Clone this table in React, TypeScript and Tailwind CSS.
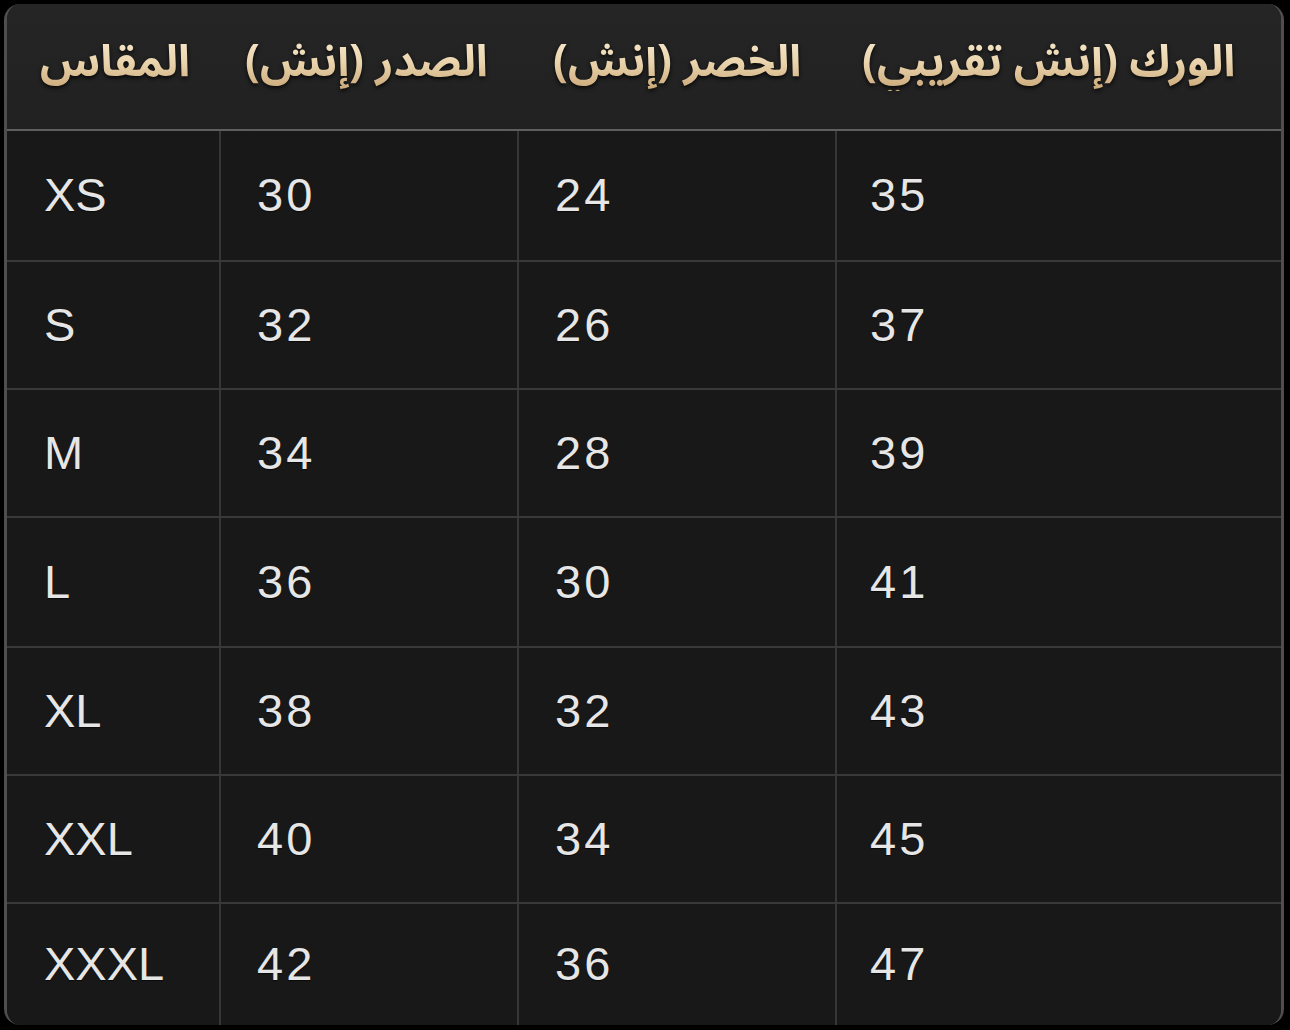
import React from "react";

const rows = [
  { s: "XS", c: "30", w: "24", h: "35", cls: "h-[131px]" },
  { s: "S", c: "32", w: "26", h: "37", cls: "h-[128px]" },
  { s: "M", c: "34", w: "28", h: "39", cls: "h-[128px]" },
  { s: "L", c: "36", w: "30", h: "41", cls: "h-[130px]" },
  { s: "XL", c: "38", w: "32", h: "43", cls: "h-[128px]" },
  { s: "XXL", c: "40", w: "34", h: "45", cls: "h-[128px]" },
  { s: "XXXL", c: "42", w: "36", h: "47", cls: "h-[121px]" },
];

function Head({ children, cls }: { children: React.ReactNode; cls: string }) {
  return (
    <div className={cls}>
      <span
        dir="rtl"
        className="inline-block whitespace-nowrap bg-gradient-to-b from-[#f7ead0] via-[#ead4ad] to-[#c9a676] bg-clip-text text-transparent font-bold text-[44px] leading-[1.3] [filter:drop-shadow(0_2px_2px_rgba(0,0,0,0.8))]"
        style={{ fontFamily: '"Noto Sans Arabic", "Noto Naskh Arabic", "DejaVu Sans", sans-serif' }}
      >
        {children}
      </span>
    </div>
  );
}

export default function App() {
  return (
    <div className="w-[1290px] h-[1030px] bg-black pt-[4px] pl-[4px]">
      <div className="w-[1280px] h-[1021px] rounded-[16px] overflow-hidden border-l-[3px] border-r-[3px] border-[#4e4e4e] bg-[#171717] flex flex-col">
        <div className="h-[127px] shrink-0 border-b-2 border-[#5e5e5e] bg-gradient-to-b from-[#252525] to-[#212121] flex items-center pb-[8px]">
          <Head cls="w-[238px] pl-[33px]">المقاس</Head>
          <Head cls="w-[308px]">الصدر (إنش)</Head>
          <Head cls="w-[309px]">الخصر (إنش)</Head>
          <Head cls="flex-1">{"الورك (إنش تقريب\u064A)"}</Head>
        </div>
        {rows.map((r, i) => (
          <div
            key={r.s}
            className={`${r.cls} shrink-0 grid grid-cols-[214px_298px_318px_1fr] ${i < rows.length - 1 ? "border-b-2 border-[#393939]" : ""}`}
            style={{ fontFamily: '"Liberation Sans", Arial, sans-serif' }}
          >
            {[r.s, r.c, r.w, r.h].map((t, j) => (
              <div
                key={j}
                className={`flex items-center text-[47px] text-[#e6e6e6] bg-[#181818] ${j === 3 ? "pl-[33px]" : "pl-[36px]"} ${j < 3 ? "border-r-2 border-[#363636]" : ""}`}
              >
                <span className={`${j === 0 ? "pl-[1px]" : "tracking-[3px]"} [text-shadow:0_1px_1px_rgba(0,0,0,0.6)]`}>{t}</span>
              </div>
            ))}
          </div>
        ))}
      </div>
    </div>
  );
}
